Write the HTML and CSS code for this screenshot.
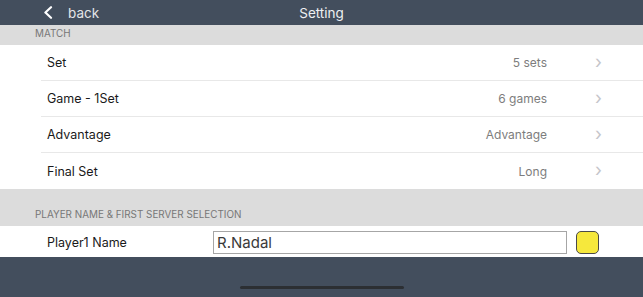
FILE: index.html
```html
<!DOCTYPE html>
<html>
<head>
<meta charset="utf-8">
<link rel="stylesheet" href="styles.css">
</head>
<body>
<div class="screen">
  <header class="topbar">
    <div class="back">
      <svg class="back-icon" width="10" height="13" viewBox="0 0 10 13"><path d="M8 1.2 L2.4 6.5 L8 11.8" fill="none" stroke="#ffffff" stroke-width="2.2" stroke-linecap="round" stroke-linejoin="round"/></svg>
      <span class="back-text">back</span>
    </div>
    <div class="title">Setting</div>
    <div></div>
  </header>
  <div class="section-head small">MATCH</div>
  <div class="list">
    <div class="row"><span class="label">Set</span><span class="value">5 sets</span><span class="chev">&#x203A;</span></div>
    <div class="row"><span class="label">Game - 1Set</span><span class="value">6 games</span><span class="chev">&#x203A;</span></div>
    <div class="row"><span class="label">Advantage</span><span class="value">Advantage</span><span class="chev">&#x203A;</span></div>
    <div class="row last"><span class="label">Final Set</span><span class="value">Long</span><span class="chev">&#x203A;</span></div>
  </div>
  <div class="section-head tall">PLAYER NAME &amp; FIRST SERVER SELECTION</div>
  <div class="player-row">
    <span class="player-label">Player1 Name</span>
    <div class="name-input">R.Nadal</div>
    <div class="swatch"></div>
  </div>
  <footer class="bottombar"><div class="home-indicator"></div></footer>
</div>
</body>
</html>
```
FILE: styles.css
```css
html, body {
  margin: 0;
  padding: 0;
}
body {
  width: 643px;
  height: 297px;
  overflow: hidden;
  font-family: "Inter", "Liberation Sans", sans-serif;
  background: #ffffff;
}
.screen {
  display: flex;
  flex-direction: column;
  height: 297px;
}
.topbar {
  height: 25px;
  background: #434e5d;
  display: grid;
  grid-template-columns: 1fr auto 1fr;
  align-items: center;
  color: #e9ebee;
}
.back {
  display: flex;
  align-items: center;
  padding-left: 43px;
}
.back-icon {
  display: block;
}
.back-text {
  margin-left: 15px;
  font-size: 13.5px;
  color: #e3e5e8;
}
.title {
  font-size: 13.5px;
  color: #eef0f2;
}
.section-head {
  background: #dcdcdc;
  color: #777777;
  font-size: 9.9px;
  padding-left: 35px;
  display: flex;
  box-sizing: border-box;
}
.section-head.small {
  height: 20px;
  align-items: center;
  padding-bottom: 5px;
}
.section-head.tall {
  height: 37px;
  align-items: flex-end;
  padding-bottom: 6px;
}
.list {
  background: #ffffff;
}
.row {
  height: 36px;
  box-sizing: border-box;
  margin-left: 41px;
  border-bottom: 1px solid #e8e8e8;
  display: flex;
  align-items: center;
  font-size: 12.5px;
}
.row.last {
  border-bottom: none;
}
.label {
  padding-left: 6px;
  color: #1a1a1a;
  flex: 1;
}
.value {
  color: #7d7d7d;
  text-align: right;
  font-size: 12px;
}
.chev {
  width: 96px;
  box-sizing: border-box;
  padding-left: 48px;
  color: #c5c5ca;
  font-size: 18px;
  line-height: 1;
  padding-bottom: 2px;
}
.player-row {
  height: 31px;
  display: flex;
  align-items: center;
  background: #ffffff;
}
.player-label {
  width: 166px;
  padding-left: 47px;
  padding-top: 2px;
  box-sizing: content-box;
  font-size: 12.5px;
  color: #1a1a1a;
}
.name-input {
  width: 354px;
  height: 23px;
  box-sizing: border-box;
  border: 1.5px solid #a6a6a6;
  font-size: 15px;
  color: #3a3a3a;
  padding-left: 3px;
  display: flex;
  align-items: center;
  margin-top: 2px;
}
.swatch {
  width: 23px;
  height: 23px;
  box-sizing: border-box;
  margin-left: 9px;
  border: 1.5px solid #4a4a4a;
  border-radius: 5px;
  background: #f6e83c;
  margin-top: 2px;
}
.bottombar {
  flex: 1;
  background: #434e5d;
  display: flex;
  justify-content: center;
  align-items: flex-end;
}
.home-indicator {
  width: 164px;
  height: 3px;
  border-radius: 2px;
  background: #2c2f33;
  margin-bottom: 8px;
}
```
